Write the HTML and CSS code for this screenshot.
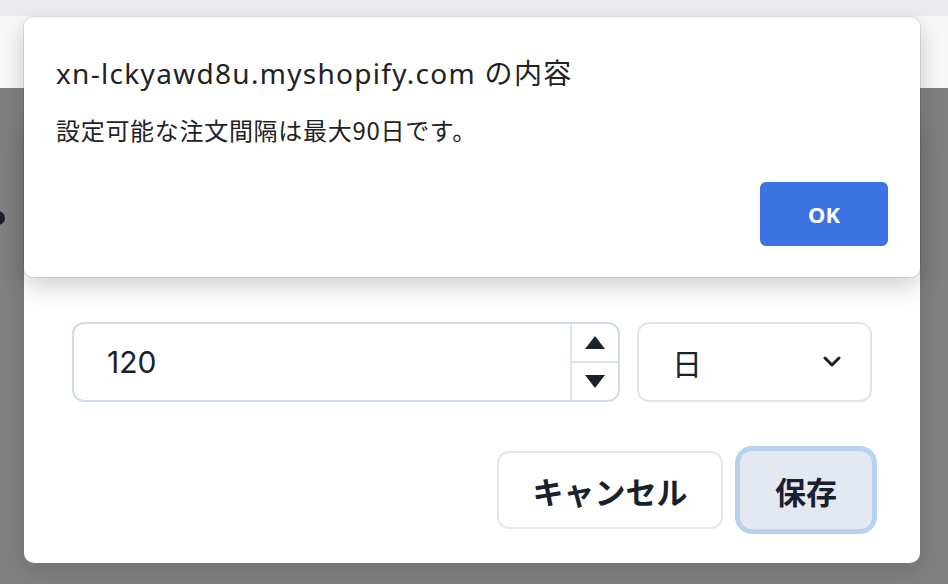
FILE: index.html
```html
<!DOCTYPE html>
<html lang="ja">
<head>
  <meta charset="UTF-8">
  <title>注文間隔の設定</title>
  <link rel="stylesheet" href="styles.css">
</head>
<body>
  <div class="topbar"></div>

  <div class="overlay">
    <span class="dot"></span>

    <div class="modal">
      <div class="fila">
        <div class="numero">
          <input type="text" class="numero-input" value="120">
          <div class="spinner">
            <span class="paso"><span class="tri-arriba"></span></span>
            <span class="paso"><span class="tri-abajo"></span></span>
          </div>
        </div>
        <div class="selector">
          <span>日</span>
          <svg width="20" height="12" viewBox="0 0 20 12">
            <path d="M3 2 L10 9 L17 2" fill="none" stroke="#1a202c" stroke-width="3" stroke-linecap="round" stroke-linejoin="round"/>
          </svg>
        </div>
      </div>

      <div class="acciones">
        <button class="btn cancelar">キャンセル</button>
        <button class="btn guardar">保存</button>
      </div>
    </div>
  </div>

  <div class="alerta">
    <div class="alerta-titulo">xn-lckyawd8u.myshopify.com の内容</div>
    <div class="alerta-mensaje">設定可能な注文間隔は最大90日です。</div>
    <div class="alerta-pie">
      <button class="btn-ok">OK</button>
    </div>
  </div>
</body>
</html>
```

FILE: styles.css
```css
body {
  margin: 0;
  background: #808080;
  font-family: Inter, "Noto Sans CJK JP", sans-serif;
  color: #1a202c;
  overflow: hidden;
  height: 584px;
}
.topbar {
  height: 88px;
  background: linear-gradient(#ebebed 0, #ebebed 16px, #f7f7f7 16px);
}
.overlay {
  position: relative;
  padding: 32px 28px 0 24px;
}
.dot {
  position: absolute;
  left: -9px;
  top: 123px;
  width: 14px;
  height: 14px;
  border-radius: 50%;
  background: #1a202c;
}
.modal {
  background: #fff;
  border-radius: 10px;
  padding: 202px 48px 34px 48px;
  box-shadow: 0 8px 20px rgba(0, 0, 0, 0.12);
}
.fila {
  display: flex;
  gap: 17px;
}
.numero {
  display: flex;
  width: 548px;
  height: 80px;
  box-sizing: border-box;
  border: 2px solid #cfdbeb;
  border-radius: 12px;
  overflow: hidden;
}
.numero-input {
  flex: 1;
  min-width: 0;
  border: none;
  outline: none;
  padding: 0 0 0 33px;
  font-family: Inter, sans-serif;
  font-size: 30px;
  color: #1a202c;
  background: transparent;
}
.spinner {
  width: 46px;
  display: flex;
  flex-direction: column;
  border-left: 2px solid #dce4ef;
}
.paso {
  flex: 1;
  display: flex;
  align-items: center;
  justify-content: center;
}
.paso + .paso {
  border-top: 2px solid #dce4ef;
}
.tri-arriba {
  width: 0;
  height: 0;
  border-left: 10px solid transparent;
  border-right: 10px solid transparent;
  border-bottom: 13px solid #1a202c;
}
.tri-abajo {
  width: 0;
  height: 0;
  border-left: 10px solid transparent;
  border-right: 10px solid transparent;
  border-top: 13px solid #1a202c;
}
.selector {
  width: 235px;
  height: 80px;
  box-sizing: border-box;
  border: 2px solid #dfe5ee;
  border-radius: 12px;
  display: flex;
  align-items: center;
  justify-content: space-between;
  padding: 0 28px 0 33px;
  font-family: "Noto Sans CJK JP", sans-serif;
  font-size: 30px;
}
.acciones {
  display: flex;
  justify-content: flex-end;
  gap: 17px;
  margin-top: 49px;
}
.btn {
  height: 78px;
  border-radius: 12px;
  font-family: "Noto Sans CJK JP", sans-serif;
  font-size: 31px;
  font-weight: bold;
  color: #1a202c;
  cursor: pointer;
}
.cancelar {
  width: 226px;
  background: #fff;
  border: 2px solid #e2e8f0;
}
.guardar {
  width: 132px;
  background: #e4e8f1;
  border: none;
  box-shadow: 0 0 0 5px #b7d1f1;
}
.alerta {
  position: absolute;
  left: 24px;
  top: 17px;
  width: 896px;
  height: 260px;
  box-sizing: border-box;
  background: #fff;
  border-radius: 9px;
  padding: 40px 32px 0 32px;
  box-shadow: 0 0 0 1px rgba(0, 0, 0, 0.1), 0 10px 24px rgba(0, 0, 0, 0.18);
}
.alerta-titulo {
  font-family: "Noto Sans", "Noto Sans CJK JP", sans-serif;
  font-size: 28px;
  letter-spacing: 1.3px;
  line-height: 32px;
  color: #222;
}
.alerta-mensaje {
  font-family: "Noto Sans CJK JP", sans-serif;
  font-size: 24px;
  letter-spacing: 0.7px;
  line-height: 30px;
  margin-top: 26px;
  color: #222;
}
.alerta-pie {
  display: flex;
  justify-content: flex-end;
  margin-top: 37px;
}
.btn-ok {
  width: 128px;
  height: 64px;
  border: none;
  border-radius: 6px;
  background: #3b74e0;
  color: #fff;
  font-family: "Noto Sans", sans-serif;
  font-size: 22px;
  font-weight: bold;
}
```
